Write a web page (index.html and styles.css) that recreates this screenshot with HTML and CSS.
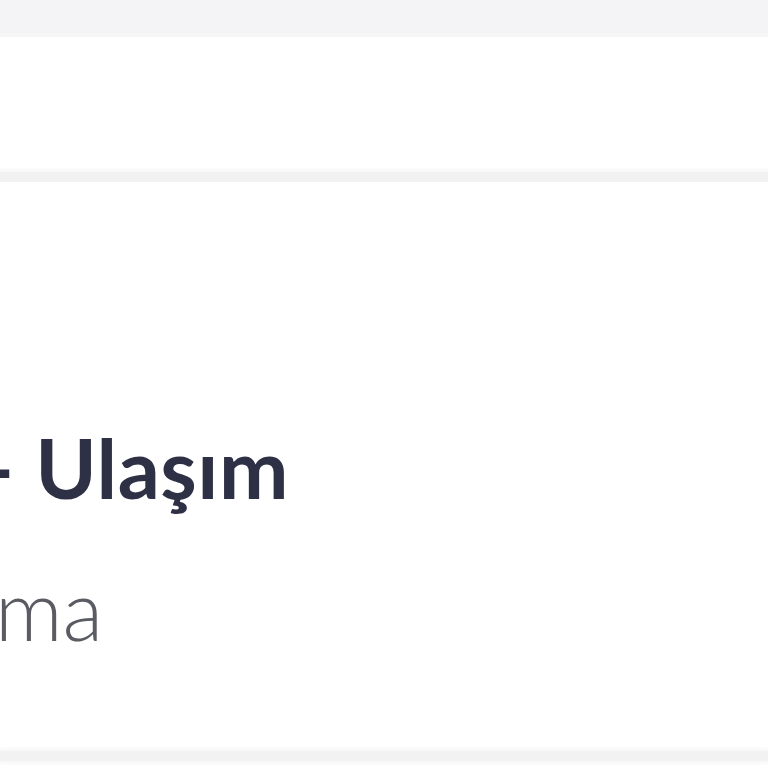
FILE: index.html
```html
<!DOCTYPE html>
<html lang="tr">

<head>
  <meta charset="UTF-8">
  <meta name="viewport" content="width=device-width, initial-scale=1.0">
  <title>Ulaşım</title>
  <link rel="stylesheet" href="styles.css">
</head>

<body>
  <div class="topbar"></div>
  <div class="search"></div>
  <div class="divider"></div>

  <div class="card">
    <p id="title">- Ulaşım</p>
    <p id="subtitle">ma</p>
  </div>
  <div class="divider"></div>
  <div class="bottom"></div>
</body>

</html>
```

FILE: styles.css
```css
html,
body {
  height: 100%;
  margin: 0;
  overflow: hidden;
  background: #ffffff;
  font-family: Lato, "Noto Sans", sans-serif;
}

p {
  margin: 0;
  padding: 0;
  white-space: nowrap;
}

.topbar {
  height: 33px;
  background: #f4f4f6;
  border-bottom: 4px solid #f6f6f7;
}

.search {
  height: 135px;
  background: #ffffff;
}

.divider {
  height: 10px;
  background: #f2f2f2;
  box-shadow: 0 0 5px 2px #f4f4f4;
}

.card {
  height: 568px;
  padding-top: 1px;
  background: #ffffff;
}

#title {
  margin-top: 243px;
  margin-left: -17px;
  font-size: 83px;
  line-height: 1;
  font-weight: 700;
  letter-spacing: 0.5px;
  color: #2e3046;
}

#subtitle {
  margin-top: 58px;
  margin-left: -5px;
  font-size: 84px;
  line-height: 1;
  font-weight: 300;
  color: #5b5c63;
}

.bottom {
  height: 20px;
}
```
